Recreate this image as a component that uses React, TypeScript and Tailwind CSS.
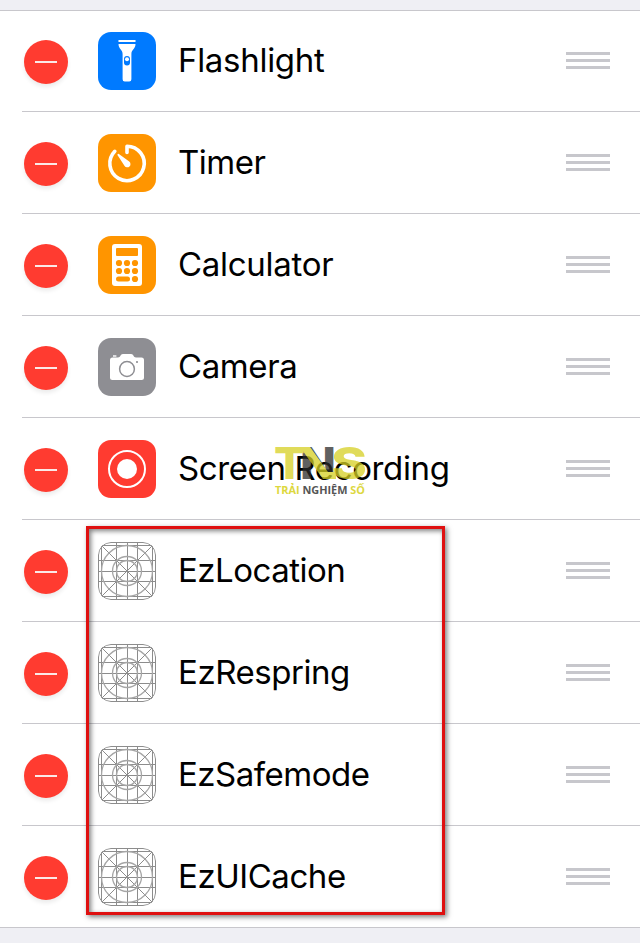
import React from "react";

function Flashlight() {
  return (
    <svg viewBox="0 0 58 58" className="size-full" fill="#fff">
      <rect x="20.3" y="8" width="17.4" height="2" rx="0.8" />
      <path d="M20.5 12h17c0 5-4.1 5.800-4.100 10v25.300a2.200 2.200 0 0 1-2.200 2.200h-4.400a2.200 2.200 0 0 1-2.200-2.200V22c0-4.200-4.100-5-4.100-10Z" />
      <rect x="26" y="24" width="6" height="9.500" rx="3" fill="#007aff" />
      <circle cx="29" cy="27.300" r="2" />
    </svg>
  );
}

function Timer() {
  return (
    <svg viewBox="0 0 58 58" className="size-full" fill="none">
      <path d="M29 18.500V12.200A17.200 17.200 0 1 1 16.800 17.300" stroke="#fff" strokeWidth="3.600" strokeLinecap="round" strokeLinejoin="round" />
      <path d="M19.600 20.200q.3-.7 1.300-.1l10.300 7.500a3.200 3.200 0 1 1-4.600 4.300l-7-10.600q-.4-.7 0-1.100Z" fill="#fff" />
    </svg>
  );
}

function Calculator() {
  return (
    <svg viewBox="0 0 58 58" className="size-full" fill="#ff9500">
      <rect x="14" y="8" width="30" height="42" rx="3" fill="#fff" />
      <rect x="18" y="12" width="22" height="8" rx="1" />
      {[27, 35].map((y) => [21, 29, 37].map((x) => <circle key={`${x}-${y}`} cx={x} cy={y} r="3.100" />))}
      <rect x="18" y="40.500" width="14" height="5" rx="2.500" />
      <circle cx="37" cy="43" r="3.100" />
    </svg>
  );
}

function Camera() {
  return (
    <svg viewBox="0 0 58 58" className="size-full">
      <path fill="#fff" d="M14.500 19.500H20c2.500 0 2.500-3.500 4.800-3.500h8.400c2.300 0 2.300 3.500 4.800 3.500h5.500a2.500 2.500 0 0 1 2.500 2.500v17.500a2.500 2.500 0 0 1-2.500 2.500h-29a2.500 2.500 0 0 1-2.500-2.500V22a2.500 2.500 0 0 1 2.500-2.500Z" />
      <rect x="15" y="17.300" width="3.400" height="1.400" fill="#fff" />
      <circle cx="29" cy="31" r="7.400" fill="none" stroke="#8e8e93" strokeWidth="1.500" />
      <circle cx="39" cy="24" r="1.100" fill="#8e8e93" />
    </svg>
  );
}

function Recording() {
  return (
    <svg viewBox="0 0 58 58" className="size-full">
      <circle cx="29" cy="29" r="18" fill="none" stroke="#fff" strokeWidth="2" />
      <circle cx="29" cy="29" r="10" fill="#fff" />
    </svg>
  );
}

function Grid() {
  return (
    <svg viewBox="0 0 58 58" className="size-full" fill="none" stroke="#8c8c8c" strokeWidth="1">
      <rect x="0.5" y="0.5" width="57" height="57" rx="12.500" />
      <path d="M3.500 4v50M18.500 0v58M29.500 0v58M39.500 0v58M54.500 4v50M4 3.500h50M0 18.500h58M0 29.500h58M0 39.500h58M4 54.500h50" />
      <path d="M4 4l50 50M54 4L4 54" />
      <g stroke="#a6a6a6" strokeWidth="1.300">
        <circle cx="29" cy="29" r="25.500" />
        <circle cx="29" cy="29" r="14.500" />
        <circle cx="29" cy="29" r="10.500" />
      </g>
    </svg>
  );
}

const items = [
  { name: "Flashlight", Icon: Flashlight, tile: "bg-[#007aff]", tracking: "tracking-[-0.3px]" },
  { name: "Timer", Icon: Timer, tile: "bg-[#ff9500]", tracking: "tracking-[-0.5px]" },
  { name: "Calculator", Icon: Calculator, tile: "bg-[#ff9500]", tracking: "tracking-[-0.28px]" },
  { name: "Camera", Icon: Camera, tile: "bg-[#8e8e93]", tracking: "tracking-[-0.4px]" },
  { name: "Screen Recording", Icon: Recording, tile: "bg-[#ff3b30]", tracking: "tracking-[-0.38px]" },
  { name: "EzLocation", Icon: Grid, tile: "", tracking: "tracking-[-0.5px]" },
  { name: "EzRespring", Icon: Grid, tile: "", tracking: "tracking-[-0.45px]" },
  { name: "EzSafemode", Icon: Grid, tile: "", tracking: "tracking-[-0.5px]" },
  { name: "EzUICache", Icon: Grid, tile: "", tracking: "tracking-[-0.45px]" },
];

function Watermark() {
  return (
    <svg className="absolute left-[270px] top-[442px] h-14 w-[100px] overflow-visible" viewBox="0 0 100 56" fontFamily="Inter, sans-serif" fontWeight="800">
      <g fontSize="44" opacity="0.75">
        <text x="30" y="37" fill="#2b2b2b" textLength="36" lengthAdjust="spacingAndGlyphs">N</text>
        <text x="4" y="37" fill="#d6d023" textLength="31" lengthAdjust="spacingAndGlyphs">T</text>
        <path d="M30 5h10l18 25h8v7H53Z" fill="#d6d023" />
        <text x="61" y="37" fill="#d6d023" textLength="36" lengthAdjust="spacingAndGlyphs">S</text>
      </g>
      <text x="5" y="51.500" fontFamily="'Open Sans', sans-serif" fontWeight="700" fontSize="10.500" textLength="90" lengthAdjust="spacingAndGlyphs" fill="#ddd83f">
        TRẢI <tspan fill="#555">NGHIỆM</tspan> SỐ
      </text>
    </svg>
  );
}

export default function App() {
  return (
    <main className="relative h-[943px] w-[640px] overflow-hidden bg-[#efeff4] pt-2.5 font-['Inter',sans-serif]">
      <ul className="border-b border-[#c8c7cc] bg-white">
        {items.map(({ name, Icon, tile, tracking }, i) => (
          <li key={name} className={i === 0 ? "border-t border-[#c8c7cc]" : "pl-[22px]"}>
            <div className={i === 0 ? "flex h-[100px] items-center pb-px pl-6 pr-[30px]" : "flex h-[102px] items-center border-t border-[#c8c7cc] pl-0.5 pr-[30px]"}>
              <span className="mt-0.5 flex size-11 items-center justify-center rounded-full bg-[#ff3b30] shadow-[0_3px_4px_rgba(0,0,0,0.08)]">
                <span className="h-0.5 w-[22px] bg-[#fbe9e7]" />
              </span>
              <span className={`ml-[30px] size-[58px] overflow-hidden rounded-[13px] ${tile}`}>
                <Icon />
              </span>
              <span className={`mb-0.5 ml-[22px] flex-1 whitespace-nowrap text-[33px] leading-10 text-black ${tracking}`}>{name}</span>
              <span className="flex flex-col gap-1">
                <span className="h-[3px] w-11 bg-[#c7c7cc]" />
                <span className="h-[3px] w-11 bg-[#c7c7cc]" />
                <span className="h-[3px] w-11 bg-[#c7c7cc]" />
              </span>
            </div>
          </li>
        ))}
      </ul>
      <Watermark />
      <div className="absolute left-[86px] top-[526px] h-[389px] w-[359px] border-[3px] border-[#df1010] shadow-[2px_2px_5px_rgba(0,0,0,0.5),inset_2px_2px_5px_rgba(0,0,0,0.5)]" />
    </main>
  );
}
